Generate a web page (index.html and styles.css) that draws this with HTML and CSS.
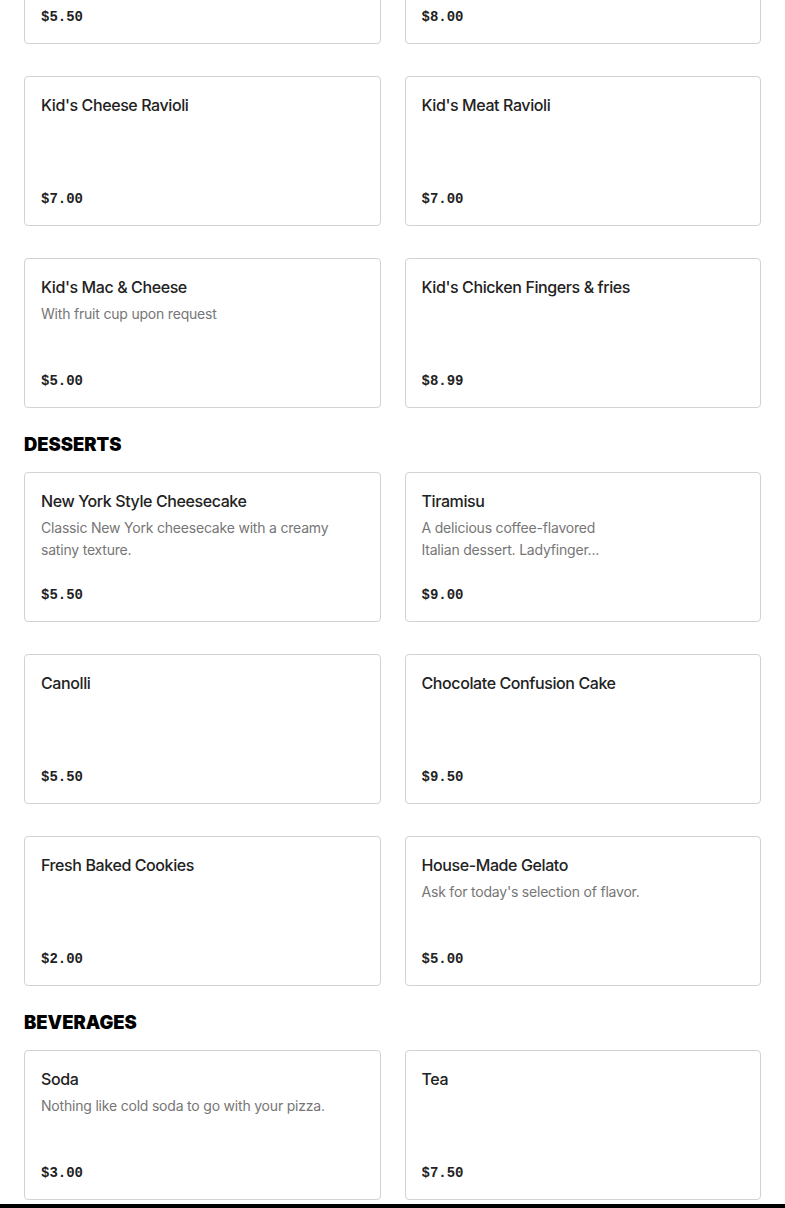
FILE: index.html
```html
<!DOCTYPE html>
<html lang="en">
<head>
<meta charset="utf-8">
<title>Menu</title>
<link rel="stylesheet" href="styles.css">
</head>
<body>
<main class="menu">
  <section class="section">
    <div class="grid">
      <div class="card"><h3 class="name">Kid's Spaghetti</h3><div class="price">$5.50</div></div>
      <div class="card"><h3 class="name">Kid's Pizza</h3><div class="price">$8.00</div></div>
      <div class="card"><h3 class="name">Kid's Cheese Ravioli</h3><div class="price">$7.00</div></div>
      <div class="card"><h3 class="name">Kid's Meat Ravioli</h3><div class="price">$7.00</div></div>
      <div class="card"><h3 class="name">Kid's Mac &amp; Cheese</h3><p class="desc">With fruit cup upon request</p><div class="price">$5.00</div></div>
      <div class="card"><h3 class="name">Kid's Chicken Fingers &amp; fries</h3><div class="price">$8.99</div></div>
    </div>
  </section>
  <section class="section">
    <h2 class="heading">DESSERTS</h2>
    <div class="grid">
      <div class="card"><h3 class="name">New York Style Cheesecake</h3><p class="desc">Classic New York cheesecake with a creamy satiny texture.</p><div class="price">$5.50</div></div>
      <div class="card"><h3 class="name">Tiramisu</h3><p class="desc">A delicious coffee-flavored<br>Italian dessert. Ladyfinger...</p><div class="price">$9.00</div></div>
      <div class="card"><h3 class="name">Canolli</h3><div class="price">$5.50</div></div>
      <div class="card"><h3 class="name">Chocolate Confusion Cake</h3><div class="price">$9.50</div></div>
      <div class="card"><h3 class="name">Fresh Baked Cookies</h3><div class="price">$2.00</div></div>
      <div class="card"><h3 class="name">House-Made Gelato</h3><p class="desc">Ask for today's selection of flavor.</p><div class="price">$5.00</div></div>
    </div>
  </section>
  <section class="section">
    <h2 class="heading">BEVERAGES</h2>
    <div class="grid">
      <div class="card"><h3 class="name">Soda</h3><p class="desc">Nothing like cold soda to go with your pizza.</p><div class="price">$3.00</div></div>
      <div class="card"><h3 class="name">Tea</h3><div class="price">$7.50</div></div>
    </div>
  </section>
</main>
<footer class="footer"></footer>
</body>
</html>
```
FILE: styles.css
```css
html, body {
  margin: 0;
  padding: 0;
  background: #ffffff;
}
body {
  font-family: "Inter", "Liberation Sans", sans-serif;
  color: #222222;
}
.menu {
  margin-top: -106px;
  padding: 0 24px 4px;
}
.section + .section {
  margin-top: 24px;
}
.heading {
  margin: 0 0 16px;
  font-family: "Inter", sans-serif;
  font-weight: 900;
  font-size: 18.4px;
  line-height: 24px;
  letter-spacing: 0;
  color: #000000;
}
.grid {
  display: grid;
  grid-template-columns: 1fr 1fr;
  column-gap: 24px;
  row-gap: 32px;
}
.card {
  box-sizing: border-box;
  height: 150px;
  border: 1px solid #d2d2d2;
  border-radius: 4px;
  padding: 16px;
  display: flex;
  flex-direction: column;
}
.name {
  margin: 0;
  font-size: 16px;
  font-weight: 500;
  line-height: 24px;
  letter-spacing: -0.4px;
  color: #222222;
}
.desc {
  margin: 4px 0 0;
  font-size: 14px;
  line-height: 22px;
  letter-spacing: -0.2px;
  color: #767676;
}
.price {
  margin-top: auto;
  margin-bottom: -1px;
  font-family: "Liberation Mono", monospace;
  font-weight: 700;
  font-size: 14px;
  line-height: 22px;
  color: #222222;
}
.footer {
  height: 120px;
  background: #000000;
}
```
